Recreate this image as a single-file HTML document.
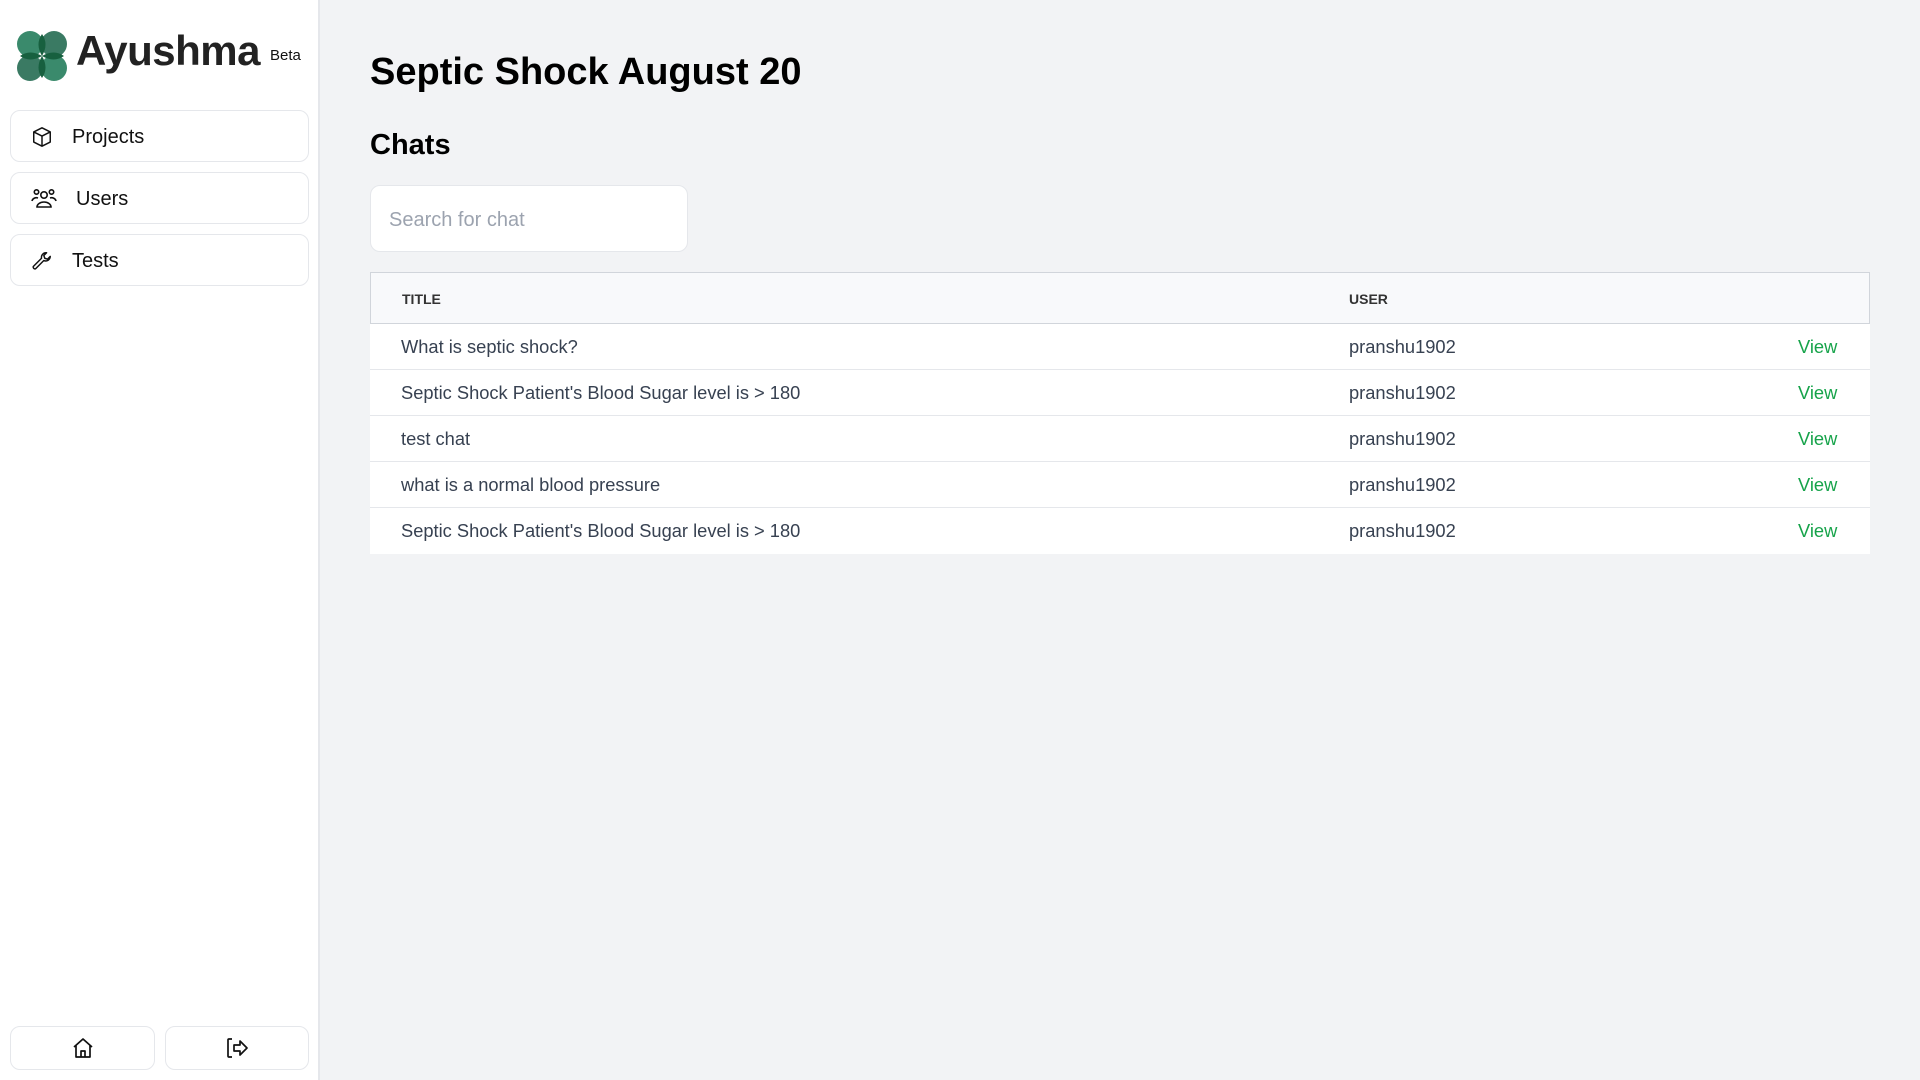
<!DOCTYPE html>
<html><head><meta charset="utf-8"><style>
*{box-sizing:border-box;margin:0;padding:0}
body{width:1920px;height:1080px;background:#f2f3f5;font-family:"Liberation Sans",sans-serif;position:relative;overflow:hidden;color:#111}
.side{position:absolute;left:0;top:0;width:320px;height:1080px;background:#fff;border-right:2px solid #e5e7eb}
.logo{position:absolute;left:16px;top:30px}
.brand{position:absolute;left:76px;top:27px;font-size:42px;font-weight:bold;color:#222;letter-spacing:-0.5px}
.beta{position:absolute;left:270px;top:47px;font-size:15px;color:#111}
.nav{position:absolute;left:10px;width:299px;height:52px;border:1px solid #e5e7eb;border-radius:10px;background:#fff}
.nav svg{position:absolute;left:20px;top:15px}
.nav span{position:absolute;top:15px;font-size:20px;color:#111}
.bb{position:absolute;top:1026px;height:44px;border:1px solid #e5e7eb;border-radius:10px;background:#fff}
.bb svg{position:absolute;left:50%;top:50%;transform:translate(-50%,-50%)}
h1{position:absolute;left:370px;top:51px;font-size:38px;font-weight:bold;color:#000}
h2{position:absolute;left:370px;top:129px;font-size:29px;font-weight:bold;color:#000}
.search{position:absolute;left:370px;top:185px;width:318px;height:67px;background:#fff;border:1px solid #e5e7eb;border-radius:10px;font-size:20px;color:#9ca3af;padding:23px 0 0 18px}
.tbl{position:absolute;left:370px;top:272px;width:1500px;background:#fff}
.th{height:52px;background:#f8f9fb;border:1px solid #d1d5db;position:relative;font-size:14px;font-weight:bold;color:#333}
.th span,.tr span{position:absolute}
.th span{top:18px}
.tr{height:46px;border-bottom:1px solid #e5e7eb;position:relative;font-size:18.3px;color:#374151}
.tr:last-child{border-bottom:none}
.tr span{top:12px}
.v{left:1428px;color:#16a34a}
</style></head><body>
<div class="side">
<svg class="logo" width="52" height="52" viewBox="0 0 52 52">
<circle cx="14" cy="14" r="13" fill="#3a8a6c"/><circle cx="38" cy="14" r="13" fill="#3a7a63"/>
<circle cx="14" cy="38" r="13" fill="#3a7a63"/><circle cx="38" cy="38" r="13" fill="#3a8a6c"/>
<path d="M26 4 Q19 14 26 26 Q33 14 26 4Z M26 48 Q19 38 26 26 Q33 38 26 48Z M4 26 Q14 19 26 26 Q14 33 4 26Z M48 26 Q38 19 26 26 Q38 33 48 26Z" fill="#17603f"/>
</svg>
<div class="brand">Ayushma</div><div class="beta">Beta</div>
<div class="nav" style="top:110px"><svg width="22" height="22" viewBox="0 0 24 24" fill="none" stroke="#111" stroke-width="1.6" stroke-linejoin="round"><path d="M12 2 21 6.5V17.5L12 22 3 17.5V6.5Z M3 6.5 12 11 21 6.5 M12 11V22"/></svg><span style="left:61px">Projects</span></div>
<div class="nav" style="top:172px"><svg width="26" height="22" viewBox="0 0 26 22" fill="none" stroke="#111" stroke-width="1.6"><circle cx="13" cy="7" r="3.2"/><path d="M6 19a7 5 0 0 1 14 0Z"/><circle cx="5.5" cy="4" r="2.2"/><circle cx="20.5" cy="4" r="2.2"/><path d="M1 13a4.5 4 0 0 1 6-3 M25 13a4.5 4 0 0 0-6-3"/></svg><span style="left:65px">Users</span></div>
<div class="nav" style="top:234px"><svg width="22" height="22" viewBox="0 0 24 24" fill="none" stroke="#111" stroke-width="1.6" stroke-linejoin="round"><path d="M21 7a5 5 0 0 1-7 4.5L5 20.5a2 2 0 0 1-2.5-2.5l9-9A5 5 0 0 1 17 3l-3 3 1 3 3 1Z"/></svg><span style="left:61px">Tests</span></div>
<div class="bb" style="left:10px;width:145px"><svg width="24" height="24" viewBox="0 0 24 24" fill="none" stroke="#111" stroke-width="1.7" stroke-linejoin="round"><path d="M3 11 12 3l9 8 M5 9.5V21h14V9.5 M10 21v-6h4v6"/></svg></div>
<div class="bb" style="left:165px;width:144px"><svg width="26" height="24" viewBox="0 0 26 24" fill="none" stroke="#111" stroke-width="1.7" stroke-linejoin="round"><path d="M8 3H5a1 1 0 0 0-1 1v16a1 1 0 0 0 1 1h3 M10 9h6V5l7 7-7 7v-4h-6Z"/></svg></div>
</div>
<h1>Septic Shock August 20</h1>
<h2>Chats</h2>
<div class="search">Search for chat</div>
<div class="tbl">
<div class="th"><span style="left:31px">TITLE</span><span style="left:978px">USER</span></div>
<div class="tr"><span style="left:31px">What is septic shock?</span><span style="left:979px">pranshu1902</span><span class="v">View</span></div>
<div class="tr"><span style="left:31px">Septic Shock Patient's Blood Sugar level is &gt; 180</span><span style="left:979px">pranshu1902</span><span class="v">View</span></div>
<div class="tr"><span style="left:31px">test chat</span><span style="left:979px">pranshu1902</span><span class="v">View</span></div>
<div class="tr"><span style="left:31px">what is a normal blood pressure</span><span style="left:979px">pranshu1902</span><span class="v">View</span></div>
<div class="tr"><span style="left:31px">Septic Shock Patient's Blood Sugar level is &gt; 180</span><span style="left:979px">pranshu1902</span><span class="v">View</span></div>
</div>
</body></html>
